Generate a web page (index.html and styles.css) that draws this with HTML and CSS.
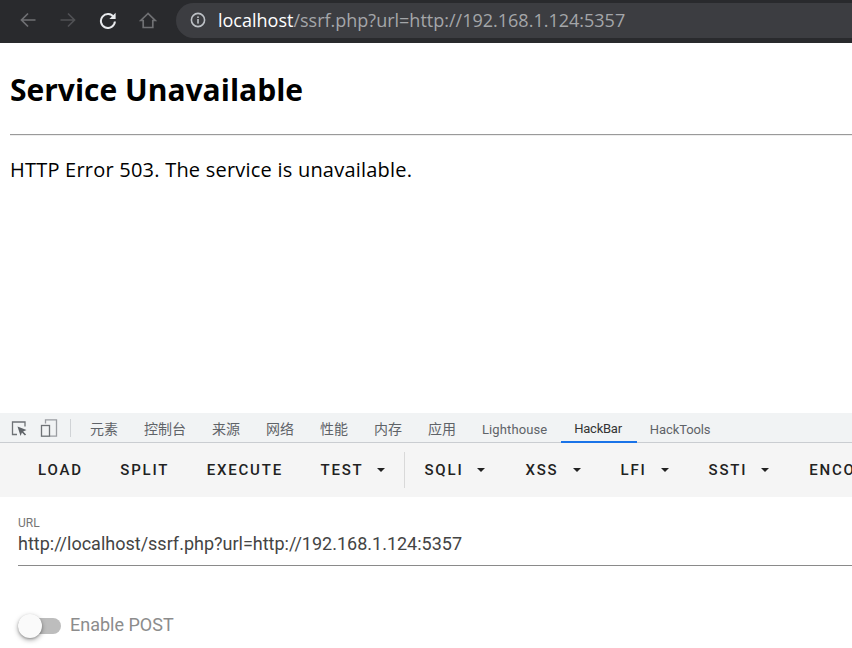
FILE: index.html
```html
<!DOCTYPE html>
<html lang="en">
<head>
<meta charset="utf-8">
<title>Service Unavailable</title>
<link rel="stylesheet" href="styles.css">
</head>
<body>
<header class="chrome">
  <svg class="nav-icon first" viewBox="0 0 18 18"><path class="dim" d="M16.5 9H2.5M9 2.5 2.5 9 9 15.5"/></svg>
  <svg class="nav-icon" viewBox="0 0 18 18"><path class="dimmer" d="M1.5 9h14M9 2.5 15.5 9 9 15.5"/></svg>
  <svg class="nav-icon" viewBox="0 0 18 18"><path class="bright" d="M14.8 6.2A7 7 0 1 0 15.9 10.5"/><path class="bright-fill" d="M16.6 1.8v6.2h-6.2z"/></svg>
  <svg class="nav-icon" viewBox="0 0 18 18"><path class="dim" d="M9 2.5 1.8 9.5h2.4v7h9.6v-7h2.4z"/></svg>
  <div class="omnibox">
    <svg class="info" viewBox="0 0 16 16"><circle class="info-ring" cx="8" cy="8" r="6.6"/><rect class="info-dot" x="7.2" y="7" width="1.6" height="4.6"/><rect class="info-dot" x="7.2" y="4.4" width="1.6" height="1.6"/></svg>
    <span class="host">localhost</span><span class="path">/ssrf.php?url=http://192.168.1.124:5357</span>
  </div>
</header>

<main class="page">
  <h1 class="title">Service Unavailable</h1>
  <hr class="rule">
  <p class="message">HTTP Error 503. The service is unavailable.</p>
</main>

<section class="devtools">
  <nav class="tabs">
    <svg class="tool-icon" viewBox="0 0 18 18"><path class="tool-line" d="M7 15.5H2.5V3h12.5v4.5"/><path class="tool-fill" d="M7.5 7.5 16.5 11l-3.4 1.4 3 3-1.2 1.2-3-3L10.6 17z"/></svg>
    <svg class="tool-icon second" viewBox="0 0 18 18"><path class="tool-line light" d="M5.5 4.5V.8h11v16.4H10"/><rect class="tool-line" x="1.5" y="6.5" width="8" height="10.7"/></svg>
    <span class="tab-sep"></span>
    <span class="tab cjk">元素</span>
    <span class="tab cjk">控制台</span>
    <span class="tab cjk">来源</span>
    <span class="tab cjk">网络</span>
    <span class="tab cjk">性能</span>
    <span class="tab cjk">内存</span>
    <span class="tab cjk">应用</span>
    <span class="tab wide">Lighthouse</span>
    <span class="tab active">HackBar</span>
    <span class="tab">HackTools</span>
  </nav>
  <div class="toolbar">
    <span class="btn">LOAD</span>
    <span class="btn">SPLIT</span>
    <span class="btn">EXECUTE</span>
    <span class="btn caret last-in-group">TEST</span>
    <span class="bar-sep"></span>
    <span class="btn caret">SQLI</span>
    <span class="btn caret">XSS</span>
    <span class="btn caret">LFI</span>
    <span class="btn caret">SSTI</span>
    <span class="btn">ENCODING</span>
  </div>
  <div class="panel">
    <div class="field">
      <label class="field-label">URL</label>
      <div class="field-value">http://localhost/ssrf.php?url=http://192.168.1.124:5357</div>
    </div>
    <div class="switch-row">
      <span class="switch"><span class="thumb"></span></span>
      <span class="switch-label">Enable POST</span>
    </div>
  </div>
</section>
</body>
</html>
```
FILE: styles.css
```css
* { box-sizing: border-box; }
html, body { margin: 0; height: 648px; overflow: hidden; background: #fff; }
body { display: flex; flex-direction: column; width: 852px; }

.chrome {
  flex: none; height: 43px; background: #292a2d;
  display: flex; align-items: center; padding: 0 0 3px 0;
}
.nav-icon { width: 18px; height: 18px; margin-right: 22px; flex: none; fill: none; }
.nav-icon.first { margin-left: 19px; }
.dim { stroke: #6f7073; stroke-width: 1.7; fill: none; }
.dimmer { stroke: #505154; stroke-width: 1.7; fill: none; }
.bright { stroke: #e8eaed; stroke-width: 2; fill: none; }
.bright-fill { fill: #e8eaed; }
.omnibox {
  flex: 1; margin-left: -3px; height: 35px;
  background: #3c3d41; border-radius: 18px 0 0 18px;
  display: flex; align-items: center; padding-left: 14px;
  font: 18px "Open Sans", "Noto Sans", sans-serif;
  white-space: nowrap; overflow: hidden;
}
.info { width: 16px; height: 16px; margin-right: 12px; flex: none; }
.info-ring { fill: none; stroke: #bdc1c6; stroke-width: 1.6; }
.info-dot { fill: #bdc1c6; }
.host { color: #fff; }
.path { color: #a4a6a9; }

.page { flex: none; height: 370px; padding: 26px 0 0 10px; color: #000; font-family: "Open Sans", "Noto Sans", sans-serif; }
.title { margin: 0; font-size: 30px; line-height: 42px; font-weight: 700; }
.rule { margin: 23px 0 0; border: 0; border-top: 1px solid #9a9a9a; border-bottom: 1px solid #eee; height: 2px; }
.message { margin: 21px 0 0; font-size: 20px; line-height: 26px; letter-spacing: 0.22px; }

.devtools { flex: 1; display: flex; flex-direction: column; min-height: 0; }
.tabs {
  flex: none; height: 30px; background: #f1f3f4; border-bottom: 1px solid #cacdd1;
  display: flex; align-items: stretch; padding-left: 10px;
  font: 13px "Roboto", "Noto Sans CJK SC", sans-serif; color: #5f6368;
}
.tool-icon { width: 18px; height: 18px; align-self: center; flex: none; }
.tool-icon.second { margin-left: 12px; }
.tool-line { fill: none; stroke: #6e7276; stroke-width: 1.3; }
.tool-line.light { stroke: #9a9da1; }
.tool-fill { fill: #5f6368; }
.tab-sep { width: 1px; height: 18px; background: #d0d3d6; align-self: center; margin: 0 6px 0 12px; flex: none; }
.tab { display: flex; align-items: center; padding: 4px 13px 0; white-space: nowrap; letter-spacing: -0.1px; }
.tab.cjk { font-size: 14px; padding-top: 0; letter-spacing: 0; }
.tab.wide { letter-spacing: 0.1px; padding-right: 14px; }
.tab.active { color: #333; border-bottom: 2px solid #1a73e8; margin-bottom: -1px; padding-top: 3px; padding-right: 15px; letter-spacing: -0.25px; }

.toolbar {
  flex: none; height: 54px; background: #f5f5f5; padding-left: 38px;
  display: flex; align-items: center;
  font: 500 15px "Roboto", sans-serif; letter-spacing: 1.8px; color: #222;
  white-space: nowrap; overflow: hidden;
}
.btn { display: inline-flex; align-items: center; margin-right: 37.5px; flex: none; }
.btn.caret { margin-right: 40px; }
.btn.caret.last-in-group { margin-right: 19px; }
.btn.caret::after {
  content: ""; margin-left: 14px;
  border-left: 4px solid transparent; border-right: 4px solid transparent; border-top: 4px solid #222;
}
.bar-sep { width: 1px; height: 36px; background: #d9d9d9; margin: 0 19px 0 0; flex: none; }

.panel { flex: 1; background: #fff; padding: 19px 0 0 18px; font-family: "Roboto", sans-serif; }
.field { border-bottom: 1px solid #8a8a8a; height: 50px; }
.field-label { display: block; font-size: 12px; line-height: 14px; color: #757575; }
.field-value { font-size: 18px; line-height: 24px; color: #444; margin-top: 2px; }
.switch-row { display: flex; align-items: center; margin-top: 51px; }
.switch { width: 43px; height: 16px; display: block; position: relative; background: #bdbdbd; border-radius: 8px; }
.thumb {
  position: absolute; left: 0; top: -4px; width: 24px; height: 24px; border-radius: 50%;
  background: #fafafa; box-shadow: 0 2px 5px rgba(0,0,0,.35), 0 1px 2px rgba(0,0,0,.2);
}
.switch-label { margin: 0 0 2px 9px; font-size: 18px; line-height: 16px; color: #8c8c8c; }
```
